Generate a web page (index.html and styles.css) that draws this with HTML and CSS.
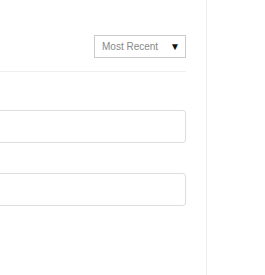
FILE: index.html
```html
<!DOCTYPE html>
<html>
<head>
    <meta charset="UTF-8">
    <title>Comments</title>
    <link rel="stylesheet" href="styles.css">
</head>
<body>
    <div class="layout">
        <div class="main">
            <div class="toolbar">
                <div class="sort-select">
                    <span>Most Recent</span>
                    <span class="arrow">&#9660;</span>
                </div>
            </div>
            <div class="fields">
                <input class="field" type="text">
                <input class="field" type="text">
            </div>
        </div>
        <div class="sidebar"></div>
    </div>
</body>
</html>
```

FILE: styles.css
```css
body {
    margin: 0;
    background: #fff;
    font-family: Arial, "Liberation Sans", sans-serif;
}

.layout {
    display: flex;
    height: 275px;
    margin-left: -20px;
}

.main {
    width: 206px;
    padding-right: 20px;
}

.toolbar {
    display: flex;
    justify-content: flex-end;
    padding-top: 35px;
    padding-bottom: 13px;
    border-bottom: 1px solid #eee;
}

.sort-select {
    display: flex;
    justify-content: space-between;
    align-items: center;
    box-sizing: border-box;
    width: 92px;
    height: 23px;
    padding: 0 5px 0 7px;
    border: 1px solid #ccc;
    font-size: 10px;
    color: #888;
}

.sort-select .arrow {
    font-size: 10px;
    color: #111;
}

.fields {
    display: flex;
    flex-direction: column;
    gap: 30px;
    padding-top: 38px;
}

.field {
    box-sizing: border-box;
    width: 100%;
    height: 33px;
    margin: 0;
    border: 1px solid #ddd;
    border-radius: 3px;
    background: #fff;
}

.sidebar {
    flex: 1;
    border-left: 1px solid #eee;
}
```
